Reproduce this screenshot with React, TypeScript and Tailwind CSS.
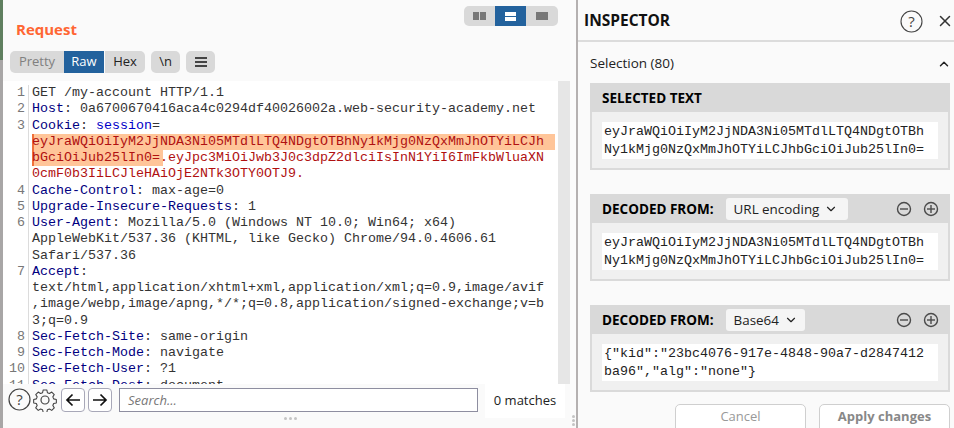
import { ChevronDown, ChevronUp, X } from 'lucide-react';

const MONO = "font-['Liberation_Mono',monospace]";

const CircleIcon = ({ sign }: { sign: 'minus' | 'plus' }) => (
  <svg width="16" height="16" viewBox="0 0 16 16" fill="none" stroke="#4a4a4a" strokeWidth="1.4">
    <circle cx="8" cy="8" r="6.5" />
    <path d="M4 8h8" />
    {sign === 'plus' && <path d="M8 4v8" />}
  </svg>
);

const Gear = () => (
  <svg width="24" height="24" viewBox="0 0 24 24" fill="none" stroke="#444" strokeWidth="1.2" strokeLinejoin="round">
    <circle cx="12" cy="12" r="4" />
    <path d="M10 1.5h4l.7 3 2.2.9 2.6-1.6 2.8 2.8-1.6 2.6.9 2.2 3 .7v3.8l-3 .7-.9 2.2 1.6 2.6-2.8 2.8-2.6-1.6-2.2.9-.7 3h-4l-.7-3-2.2-.9-2.6 1.6-2.8-2.8 1.6-2.6-.9-2.2-3-.7v-3.8l3-.7.9-2.2-1.6-2.6 2.8-2.8 2.6 1.6 2.2-.9z" transform="translate(1.2 .6) scale(.9)" />
  </svg>
);

const Arrow = ({ flip }: { flip?: boolean }) => (
  <button className="w-[24px] h-[24px] rounded-[4px] border border-[#a8a8b8] bg-white flex items-center justify-center">
    <svg width="16" height="14" viewBox="0 0 16 14" fill="none" stroke="#111" strokeWidth="1.7" className={flip ? 'rotate-180' : ''}>
      <path d="M15 7H2M7.5 1.5 2 7l5.5 5.5" />
    </svg>
  </button>
);

type Row = { n?: number; parts: [string, string][]; sel?: number };

const black = 'text-[#333333]';
const key = 'text-[#000080]';
const blue = 'text-[#0000c8]';
const red = 'text-[#b01010]';

const rows: Row[] = [
  { n: 1, parts: [['GET /my-account HTTP/1.1', black]] },
  { n: 2, parts: [['Host', key], [': 0a6700670416aca4c0294df40026002a.web-security-academy.net', black]] },
  { n: 3, parts: [['Cookie', key], [': ', black], ['session', blue], ['=', black]] },
  { parts: [['eyJraWQiOiIyM2JjNDA3Ni05MTdlLTQ4NDgtOTBhNy1kMjg0NzQxMmJhOTYiLCJh', red]], sel: 523 },
  { parts: [['bGciOiJub25lIn0=', red], ['.eyJpc3MiOiJwb3J0c3dpZ2dlciIsInN1YiI6ImFkbWluaXN', red]], sel: 131 },
  { parts: [['0cmF0b3IiLCJleHAiOjE2NTk3OTY0OTJ9.', red]] },
  { n: 4, parts: [['Cache-Control', key], [': max-age=0', black]] },
  { n: 5, parts: [['Upgrade-Insecure-Requests', key], [': 1', black]] },
  { n: 6, parts: [['User-Agent', key], [': Mozilla/5.0 (Windows NT 10.0; Win64; x64)', black]] },
  { parts: [['AppleWebKit/537.36 (KHTML, like Gecko) Chrome/94.0.4606.61', black]] },
  { parts: [['Safari/537.36', black]] },
  { n: 7, parts: [['Accept', key], [':', black]] },
  { parts: [['text/html,application/xhtml+xml,application/xml;q=0.9,image/avif', black]] },
  { parts: [[',image/webp,image/apng,*/*;q=0.8,application/signed-exchange;v=b', black]] },
  { parts: [['3;q=0.9', black]] },
  { n: 8, parts: [['Sec-Fetch-Site', key], [': same-origin', black]] },
  { n: 9, parts: [['Sec-Fetch-Mode', key], [': navigate', black]] },
  { n: 10, parts: [['Sec-Fetch-User', key], [': ?1', black]] },
  { n: 11, parts: [['Sec-Fetch-Dest', key], [': document', black]] },
];

const Card = ({ title, select, selectW, lines, className }: { title: string; select?: string; selectW?: string; lines: string[]; className: string }) => (
  <section className={`shrink-0 bg-[#f0f0f0] border-x-2 border-b-2 border-[#dadada] ${className}`}>
    <div className="h-[29px] -mx-[2px] bg-[#d9d9d9] flex items-center pl-[12px] pr-[11px]">
      <span className="mt-[2px] text-[13.5px] font-bold text-black">{title}</span>
      {select && (
        <div className={`ml-[12px] h-[22px] rounded-[3px] bg-[#f5f5f5] flex items-center pl-[8px] text-[13.4px] text-[#222] gap-[5px] ${selectW}`}>
          <span className="mt-[2px]">{select}</span>
          <ChevronDown size={14} strokeWidth={2} />
        </div>
      )}
      {select && (
        <div className="ml-auto flex gap-[11px]">
          <CircleIcon sign="minus" />
          <CircleIcon sign="plus" />
        </div>
      )}
    </div>
    <div className="mx-[10px] mt-[10px] mb-[9px] h-[37px] bg-white px-[2px] pt-[1px]">
      {lines.map((line) => (
        <div key={line} className={`${MONO} text-[13.33px] leading-[17.5px] text-[#222] whitespace-pre`}>{line}</div>
      ))}
    </div>
  </section>
);

export default function App() {
  const token = ['eyJraWQiOiIyM2JjNDA3Ni05MTdlLTQ4NDgtOTBh', 'Ny1kMjg0NzQxMmJhOTYiLCJhbGciOiJub25lIn0='];

  return (
    <div className="w-[954px] h-[428px] flex overflow-hidden bg-[#fafafa] font-['Open_Sans',sans-serif]">
      <div className="w-[3px] bg-[#a8a6a6] flex flex-col">
        <div className="h-[60px] bg-[#5f7f5f]" />
      </div>

      {/* Request pane */}
      <div className="w-[567px] flex flex-col">
        <div className="h-[81px] shrink-0">
          <div className="flex justify-end pt-[6px] pr-[12px]">
            <div className="flex h-[20px] w-[94px] rounded-[5px] bg-[#d9d9d9] overflow-hidden">
              <div className="w-[31px] flex items-center justify-center gap-px">
                <span className="w-[6px] h-[8px] bg-[#777]" />
                <span className="w-[6px] h-[8px] bg-[#777]" />
              </div>
              <div className="w-[31px] bg-[#23629d] flex flex-col items-center justify-center gap-px">
                <span className="w-[11px] h-[4px] bg-white" />
                <span className="w-[11px] h-[4px] bg-white" />
              </div>
              <div className="flex-1 flex items-center justify-center">
                <span className="w-[12px] h-[8px] bg-[#777]" />
              </div>
            </div>
          </div>
          <h1 className="ml-[13px] -mt-[7px] text-[15px] leading-[20px] font-bold text-[#ff6633]">Request</h1>
          <div className="ml-[7px] mt-[12px] flex text-[13px] h-[22px]">
            <div className="w-[54px] rounded-l-[5px] bg-[#d9d9d9] text-[#808080] flex items-center justify-center">Pretty</div>
            <div className="w-[40px] bg-[#23629d] text-white flex items-center justify-center">Raw</div>
            <div className="w-[40px] ml-px rounded-r-[5px] bg-[#d9d9d9] text-[#222] flex items-center justify-center">Hex</div>
            <div className="w-[29px] ml-[6px] rounded-[5px] bg-[#d9d9d9] text-[#222] flex items-center justify-center">\n</div>
            <div className="w-[29px] ml-[6px] rounded-[5px] bg-[#d9d9d9] flex flex-col items-center justify-center gap-[2px]">
              <span className="w-[12px] h-[2px] bg-[#444]" />
              <span className="w-[12px] h-[2px] bg-[#444]" />
              <span className="w-[12px] h-[2px] bg-[#444]" />
            </div>
          </div>
        </div>

        <div className="h-[303px] shrink-0 flex overflow-hidden">
          <div className={`w-[555px] bg-white pt-[2px] overflow-hidden ${MONO} text-[13.33px] leading-[16.25px]`}>
            <div className="h-[2px]" />
            {rows.map((row, i) => (
              <div key={i} className="flex h-[16.25px]">
                <div className="w-[26px] shrink-0 pr-[3px] text-right text-[#777] border-r border-[#dcdcdc]">{row.n}</div>
                <div className="relative ml-[3px] whitespace-pre">
                  {row.sel && (
                    <span className="absolute left-0 top-0 h-[16.25px] bg-[#ffc599] border-l-2 border-[#f0703a]" style={{ width: row.sel }} />
                  )}
                  <span className="relative">
                    {row.parts.map(([text, color], j) => (
                      <span key={j} className={color}>{text}</span>
                    ))}
                  </span>
                </div>
              </div>
            ))}
          </div>
          <div className="w-[12px] bg-[#e6e6e6]" />
        </div>

        <div className="h-[37px] shrink-0 flex items-start pl-[5px] gap-[1px] pt-[4px]">
          <svg width="23" height="23" viewBox="0 0 23 23" fill="none" className="mr-[1px]">
            <circle cx="11.5" cy="11.5" r="10.5" stroke="#444" strokeWidth="1.2" />
            <text x="11.5" y="17" textAnchor="middle" fontSize="15" fill="#444" fontFamily="Open Sans">?</text>
          </svg>
          <Gear />
          <div className="w-[2px]" />
          <div className="flex gap-[3px]">
            <Arrow />
            <Arrow flip />
          </div>
          <div className="ml-[6px] w-[359px] h-[24px] border border-[#8e8ea0] bg-white pl-[8px] text-[13px] italic text-[#777] leading-[22px]">Search...</div>
          <div className="ml-[6px] -mt-[4px] w-[80px] h-[34px] bg-white text-[13px] text-[#222] flex items-center justify-center">0 matches</div>
        </div>
        <div className="flex justify-center gap-[2px] pl-[8px] -mt-[4px]">
          <span className="w-[3px] h-[3px] rounded-full bg-[#c4c4c4]" />
          <span className="w-[3px] h-[3px] rounded-full bg-[#c4c4c4]" />
          <span className="w-[3px] h-[3px] rounded-full bg-[#c4c4c4]" />
        </div>
      </div>

      {/* Sash */}
      <div className="w-[6px] flex flex-col justify-end items-center gap-[1px] pb-[2px] bg-[#fbfbfb]">
        <span className="w-[3px] h-[3px] rounded-full bg-[#c4c4c4]" />
        <span className="w-[3px] h-[3px] rounded-full bg-[#c4c4c4]" />
        <span className="w-[3px] h-[3px] rounded-full bg-[#c4c4c4]" />
      </div>
      <div className="w-[2px] bg-[#b5b1b1]" />

      {/* Inspector */}
      <div className="flex-1 flex flex-col overflow-hidden">
        <div className="h-[42px] shrink-0 border-b-2 border-[#dcdcdc] flex items-center pl-[6px] pt-[2px]">
          <span className="text-[15.5px] font-bold text-[#111]">INSPECTOR</span>
          <svg width="23" height="23" viewBox="0 0 23 23" fill="none" className="ml-auto">
            <circle cx="11.5" cy="11.5" r="10.5" stroke="#444" strokeWidth="1.1" />
            <text x="11.5" y="17" textAnchor="middle" fontSize="15" fill="#444" fontFamily="Open Sans">?</text>
          </svg>
          <X size={18} strokeWidth={2} className="ml-[13px] text-[#333]" />
        </div>
        <div className="h-[41px] shrink-0 flex items-center pl-[12px] pr-[3px] pt-[2px] text-[13.5px] text-[#222]">
          Selection (80)
          <ChevronUp size={14} strokeWidth={2.5} className="ml-auto" />
        </div>
        <div className="ml-[12px] w-[360px] flex flex-col shrink-0">
          <Card title="SELECTED TEXT" lines={token} className="" />
          <Card title="DECODED FROM:" select="URL encoding" selectW="w-[122px]" lines={token} className="mt-[24px]" />
          <Card title="DECODED FROM:" select="Base64" selectW="w-[79px]" lines={['{"kid":"23bc4076-917e-4848-90a7-d2847412', 'ba96","alg":"none"}']} className="mt-[24px]" />
          <div className="mt-[12px] flex justify-end gap-[13px] shrink-0">
            <button className="w-[131px] h-[30px] pb-[4px] rounded-[5px] border border-[#cfcfcf] bg-white text-[13px] text-[#999]">Cancel</button>
            <button className="w-[131px] h-[30px] pb-[4px] rounded-[5px] border border-[#cfcfcf] bg-white text-[13px] font-bold text-[#888]">Apply changes</button>
          </div>
        </div>
      </div>
    </div>
  );
}
